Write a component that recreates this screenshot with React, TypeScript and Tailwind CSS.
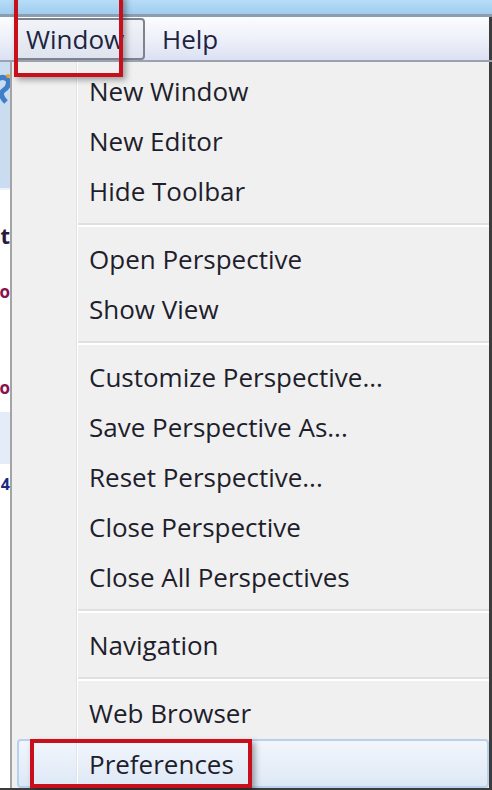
import React from "react";

type Entry = { label: string } | { sep: true };

const entries: Entry[] = [
  { label: "New Window" },
  { label: "New Editor" },
  { label: "Hide Toolbar" },
  { sep: true },
  { label: "Open Perspective" },
  { label: "Show View" },
  { sep: true },
  { label: "Customize Perspective..." },
  { label: "Save Perspective As..." },
  { label: "Reset Perspective..." },
  { label: "Close Perspective" },
  { label: "Close All Perspectives" },
  { sep: true },
  { label: "Navigation" },
  { sep: true },
  { label: "Web Browser" },
];

const font = { fontFamily: '"Open Sans", "Noto Sans", sans-serif' };

export default function App() {
  return (
    <div
      className="relative w-[492px] h-[790px] overflow-hidden bg-white flex flex-col text-[#1e1e2c]"
      style={font}
    >
      {/* title strip */}
      <div className="h-[14px] bg-gradient-to-b from-[#b7dcf6] to-[#9fcdf0] shrink-0" />
      <div className="h-[3px] bg-[#8e9cb0] shrink-0" />
      {/* menu bar */}
      <div className="h-[43px] shrink-0 bg-gradient-to-b from-[#fbfcfe] via-[#eef1f9] to-[#dce1f3] flex items-stretch">
        <div className="ml-[14px] mt-[1px] w-[131px] rounded-[4px] border-2 border-[#7d828c] bg-gradient-to-b from-[#f1f3f8] to-[#dfe3ef] flex items-center pl-[10px] text-[26px] leading-none text-[#1c2440]">
          Window
        </div>
        <div className="ml-[17px] flex items-center text-[26px] leading-none text-[#1c2440]">Help</div>
        <div className="flex-1" />
        <div className="w-[3px] bg-[#3c3c3c]" />
      </div>
      <div className="h-[2px] bg-[#9aa2b2] shrink-0" />
      {/* body */}
      <div className="flex-1 flex min-h-0">
        {/* background window strip */}
        <div className="w-[10px] shrink-0 flex flex-col overflow-hidden">
          <div className="h-[126px] bg-[#c9dcf0] flex items-start">
            <svg width="10" height="40" viewBox="0 0 10 40" className="mt-[10px]">
              <path d="M-6 10 Q2 2 8 8 Q10 14 4 18 Q-2 22 6 30" stroke="#3f7fc8" strokeWidth="5" fill="none" />
              <circle cx="8" cy="4" r="2" fill="#e8a030" />
            </svg>
          </div>
          <div className="h-[2px] bg-[#eef3fa]" />
          <div className="h-[30px] bg-white" />
          <div className="h-[30px] flex justify-end items-center text-[22px] font-bold text-[#2a1a3a] leading-none">
            <span>t</span>
          </div>
          <div className="h-[26px] bg-white" />
          <div className="h-[30px] flex justify-end items-center text-[17px] font-bold text-[#8a1050] leading-none">
            <span>o</span>
          </div>
          <div className="h-[66px] bg-white" />
          <div className="h-[30px] flex justify-end items-center text-[17px] font-bold text-[#8a1050] leading-none">
            <span>o</span>
          </div>
          <div className="h-[10px] bg-white" />
          <div className="h-[52px] bg-[#e4ecf9]" />
          <div className="h-[40px] flex justify-end items-center text-[16px] font-bold text-[#1a2a80] leading-none">
            <span>4</span>
          </div>
          <div className="flex-1 bg-white" />
        </div>
        <div className="w-[2px] shrink-0 bg-[#a4a4a4]" />
        {/* menu */}
        <div className="flex-1 bg-[#f0f0f0] relative flex flex-col pt-[4px]">
          {/* gutter line */}
          <div className="absolute left-[64px] top-0 bottom-0 w-[2px] flex">
            <div className="w-[1px] bg-[#e2e3e3]" />
            <div className="w-[1px] bg-white" />
          </div>
          {entries.map((e, i) =>
            "sep" in e ? (
              <div key={i} className="h-[18px] flex flex-col justify-center pl-[66px] shrink-0">
                <div className="h-[2px] bg-[#e0e0e0]" />
                <div className="h-[2px] bg-white" />
              </div>
            ) : (
              <div key={i} className="h-[50px] shrink-0 flex items-center pl-[77px] text-[26px] leading-none">
                {e.label}
              </div>
            )
          )}
          <div className="h-[49px] shrink-0 ml-[5px] mt-[1px] rounded-[4px] border-2 border-[#b8d2ee] bg-gradient-to-b from-[#f2f6fc] to-[#dde8f6] flex items-center pl-[70px] text-[26px] leading-none">
            Preferences
          </div>
        </div>
        <div className="w-[3px] shrink-0 bg-[#3c3c3c]" />
      </div>
      <div className="h-[2px] shrink-0 bg-[#3c3c3c]" />

      {/* red annotation boxes */}
      <div className="absolute left-[14px] top-[-6px] w-[109px] h-[83px] border-[4px] border-[#c8101c] shadow-[3px_3px_6px_rgba(0,0,0,0.35)]" />
      <div className="absolute left-[30px] top-[739px] w-[222px] h-[49px] border-[4px] border-[#c8101c] shadow-[3px_3px_6px_rgba(0,0,0,0.35)]" />
    </div>
  );
}
